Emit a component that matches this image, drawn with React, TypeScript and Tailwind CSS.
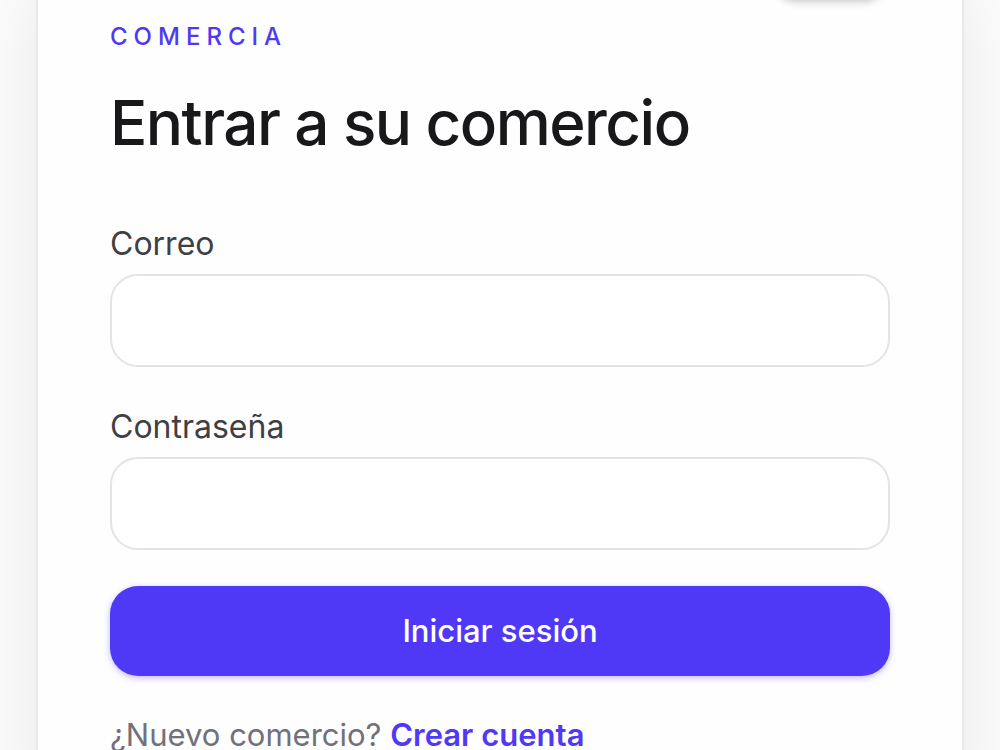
export default function App() {
  return (
    <main className="h-screen overflow-x-hidden overflow-y-auto bg-[#fafafa] px-9 font-['Inter',sans-serif] [scrollbar-width:none]">
      <section className="min-h-full border-x-2 border-[#e8e9ec] bg-[#fefefe] px-[72px] pb-10 shadow-[0_0_48px_rgba(0,0,0,0.07)]">
        <div className="flex h-[21px] justify-end">
          <div aria-hidden="true" className="-mt-10 mr-2 h-10 w-26 rounded-2xl bg-white shadow-[0_1px_8px_rgba(0,0,0,0.25)]" />
        </div>
        <p className="text-2xl leading-8 font-medium tracking-[0.25em] text-[#4f39f6]">COMERCIA</p>
        <h1 className="mt-8 text-[62px] leading-[76px] font-medium tracking-tight text-[#18181b]">Entrar a su comercio</h1>
        <form className="mt-[63px]">
          <label htmlFor="email" className="block text-[32px] leading-10 text-[#3f3f46]">Correo</label>
          <input id="email" type="email" className="mt-[10px] block h-[93px] w-full rounded-[28px] border-2 border-[#e4e4e7] bg-white px-6 text-[32px]" />
          <label htmlFor="password" className="mt-10 block text-[32px] leading-10 text-[#3f3f46]">Contraseña</label>
          <input id="password" type="password" className="mt-[10px] block h-[93px] w-full rounded-[28px] border-2 border-[#e4e4e7] bg-white px-6 text-[32px]" />
          <button type="submit" className="mt-9 h-[90px] w-full rounded-[28px] bg-[#4f39f6] text-[31px] font-medium text-white shadow-[0_2px_6px_rgba(79,57,246,0.35)]">Iniciar sesión</button>
        </form>
        <p className="mt-9 text-[31px] leading-[46px] text-[#71717b]">¿Nuevo comercio? <a href="#" className="font-semibold text-[#4f39f6]">Crear cuenta</a></p>
      </section>
    </main>
  );
}
